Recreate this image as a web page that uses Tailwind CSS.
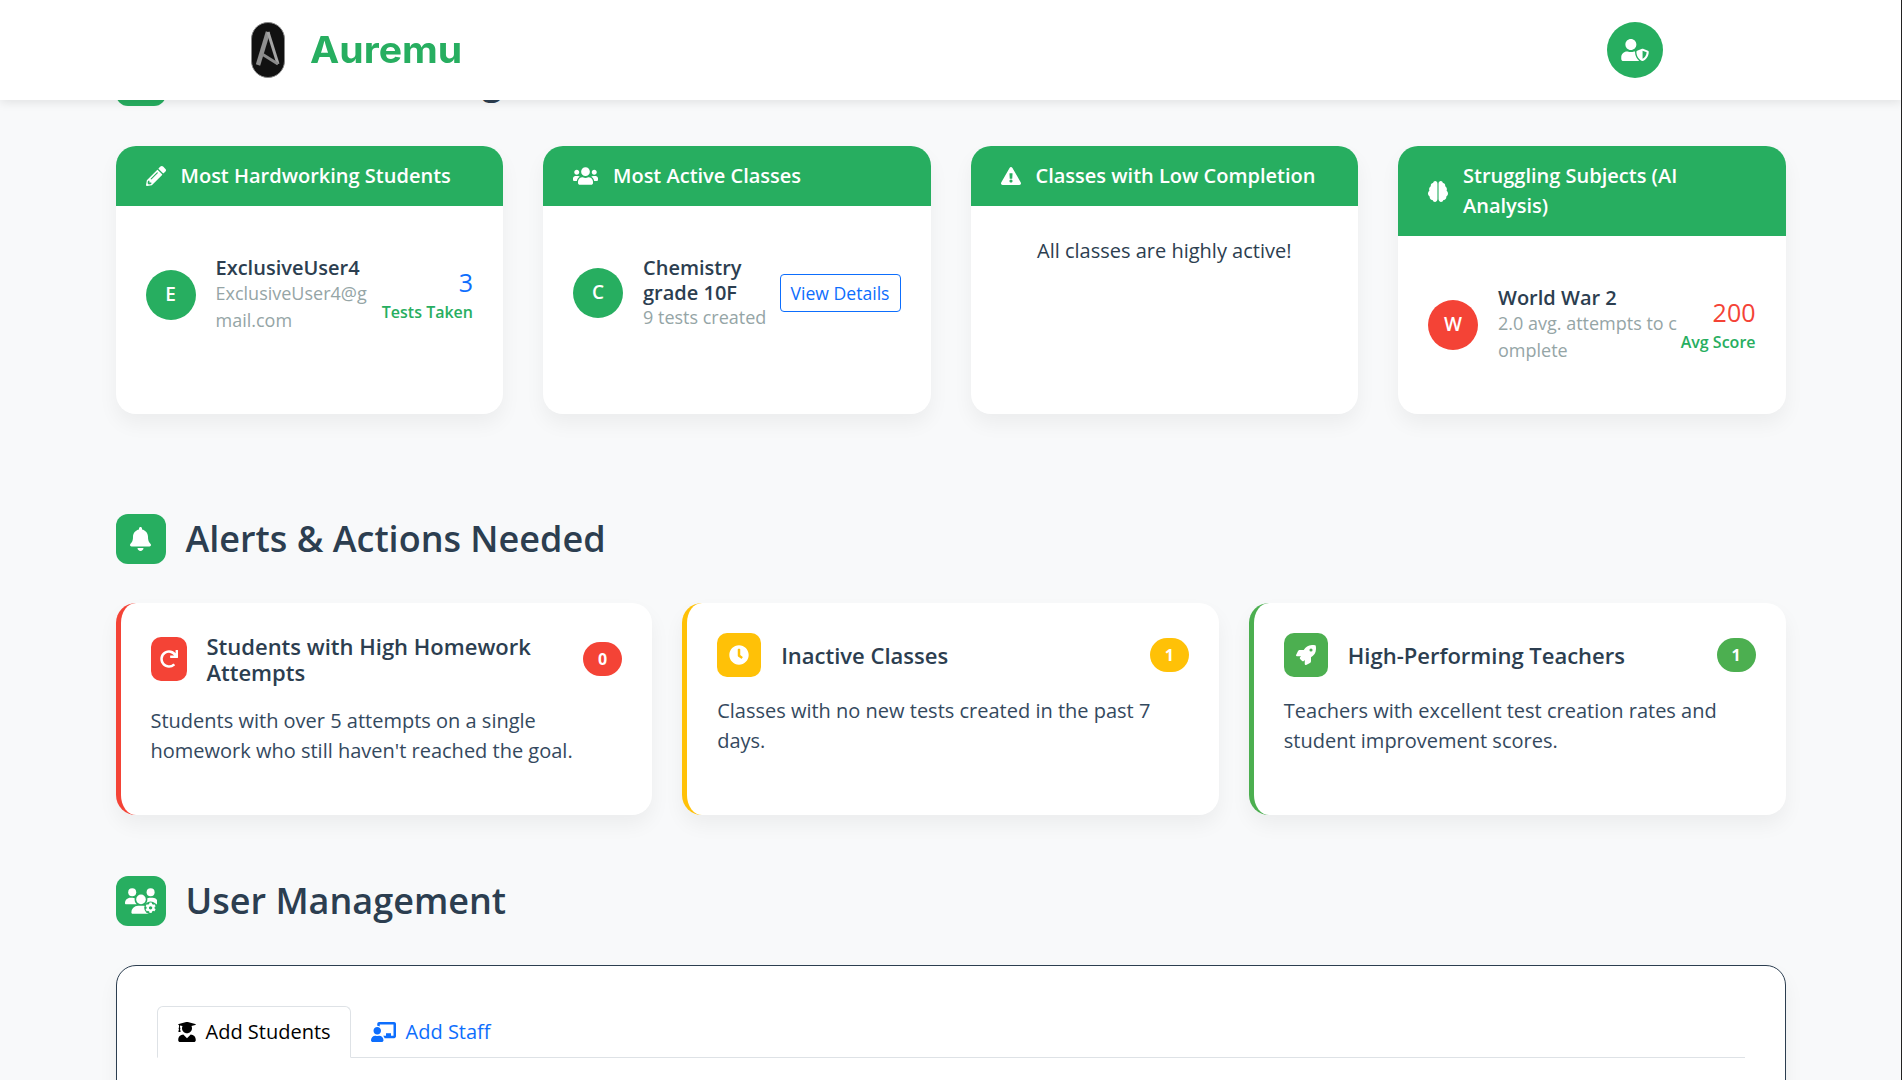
<!doctype html>
<html lang="en">
  <head>
    <meta charset="UTF-8" />
    <title>Auremu</title>
    <script src="https://cdn.jsdelivr.net/npm/@tailwindcss/browser@4"></script>
  </head>

  <body class="bg-[#f8f9fa] h-screen overflow-hidden relative font-['Open_Sans',sans-serif] text-[#2c3e50]">
    <!-- NAV -->
    <nav class="fixed top-0 left-0 right-0 z-10 h-[100px] bg-white shadow-[0_2px_10px_rgba(0,0,0,0.1)] flex items-center justify-between pl-[250px] pr-[239px]">
      <div class="flex items-center gap-[24px]">
        <svg class="w-[36px] h-[56px] blur-[0.4px]" viewBox="0 0 36 56">
          <rect x="1.5" y="0.5" width="33" height="55" rx="16.5" fill="#111" stroke="#888" stroke-width="1" />
          <path d="M8 43 L18 10" fill="none" stroke="#8f8f8f" stroke-width="4.5" />
          <path d="M18 10 L28 42" fill="none" stroke="#a5a5a5" stroke-width="3" />
          <path d="M12 32 L28 42" fill="none" stroke="#8a8a8a" stroke-width="3" />
        </svg>
        <span class="font-['Inter',sans-serif] font-bold text-[37px] origin-left scale-x-[1.06] text-[#27ae60]">Auremu</span>
      </div>
      <div class="w-[56px] h-[56px] rounded-full bg-[#27ae60] flex items-center justify-center">
        <svg class="w-[28px] h-[22px] fill-white" viewBox="0 0 640 512"><path d="M622.3 271.1l-115.2-45c-4.1-1.6-12.6-3.7-22.2 0l-115.2 45c-10.7 4.2-17.7 14-17.7 24.9 0 111.6 68.7 188.8 132.9 213.9 9.6 3.7 18 1.6 22.2 0C558.4 489.9 640 420.5 640 296c0-10.9-7-20.7-17.7-24.9zM496 462.4V273.3l95.5 37.3c-5.6 87.1-60.9 135.4-95.5 151.8zM224 256c70.7 0 128-57.3 128-128S294.7 0 224 0 96 57.3 96 128s57.3 128 128 128zm96 40c0-2.5.8-4.8 1.1-7.2-2.5-.1-4.9-.8-7.5-.8h-16.7c-22.2 10.2-46.9 16-72.9 16s-50.6-5.8-72.9-16h-16.7C60.2 288 0 348.2 0 422.4V464c0 26.5 21.5 48 48 48h352c6.2 0 12.1-1.3 17.5-3.4C369.4 468.7 320 397.5 320 296z" /></svg>
      </div>
    </nav>

    <main class="pl-[115.5px] pr-[116.5px] pt-[56px]">
      <!-- RANKINGS -->
      <div class="flex items-center gap-[20px] mb-[40px]">
        <div class="w-[50px] h-[50px] rounded-[12px] bg-[#27ae60]"></div>
        <h2 class="text-[36px] leading-[50px] font-semibold tracking-[-0.5px]">Teacher &amp; Rankings</h2>
      </div>

      <div class="grid grid-cols-4 gap-[40px] h-[268px] mb-[100px]">
        <div class="bg-white rounded-[20px] shadow-[0_10px_20px_rgba(0,0,0,0.05)] overflow-hidden">
          <div class="bg-[#27ae60] text-white flex items-center gap-[15px] px-[30px] py-[15px] text-[20px] leading-[30px] font-semibold">
            <svg class="w-[20px] h-[20px] fill-white shrink-0" viewBox="0 0 512 512"><path d="M497.9 142.1l-46.1 46.1c-4.7 4.7-12.3 4.7-17 0l-111-111c-4.7-4.7-4.7-12.3 0-17l46.1-46.1c18.7-18.7 49.1-18.7 67.9 0l60.1 60.1c18.8 18.7 18.8 49.1 0 67.9zM284.2 99.8L21.6 362.4.4 483.9c-2.9 16.4 11.4 30.6 27.8 27.8l121.5-21.3 262.6-262.6c4.7-4.7 4.7-12.3 0-17l-111-111c-4.8-4.7-12.4-4.7-17.1 0zM124.1 339.9c-5.5-5.5-5.5-14.3 0-19.8l154-154c5.5-5.5 14.3-5.5 19.8 0s5.5 14.3 0 19.8l-154 154c-5.5 5.5-14.3 5.5-19.8 0zM88 424h48v36.3l-64.5 11.3-31.1-31.1L51.7 376H88v48z" /></svg>
            <span>Most Hardworking Students</span>
          </div>
          <div class="px-[30px] pt-[49px] flex items-center">
            <div class="w-[50px] h-[50px] mr-[20px] rounded-full bg-[#27ae60] text-white font-semibold text-[19px] flex items-center justify-center shrink-0">E</div>
            <div class="flex-1 min-w-0">
              <div class="text-[20px] leading-[25px] font-semibold">ExclusiveUser4</div>
              <div class="text-[18px] leading-[27px] text-[#95a5a6] break-all">ExclusiveUser4@gmail.com</div>
            </div>
            <div class="text-right shrink-0 pb-[2px]">
              <div class="text-[25px] leading-[36px] font-medium text-[#0d6efd]">3</div>
              <div class="text-[16px] leading-[24px] font-semibold text-[#27ae60] whitespace-nowrap">Tests Taken</div>
            </div>
          </div>
        </div>

        <div class="bg-white rounded-[20px] shadow-[0_10px_20px_rgba(0,0,0,0.05)] overflow-hidden">
          <div class="bg-[#27ae60] text-white flex items-center gap-[15px] px-[30px] py-[15px] text-[20px] leading-[30px] font-semibold">
            <svg class="w-[25px] h-[20px] fill-white shrink-0" viewBox="0 0 640 512"><path d="M96 224c35.3 0 64-28.7 64-64s-28.7-64-64-64-64 28.7-64 64 28.7 64 64 64zm448 0c35.3 0 64-28.7 64-64s-28.7-64-64-64-64 28.7-64 64 28.7 64 64 64zm32 32h-64c-17.6 0-33.5 7.1-45.1 18.6 40.3 22.1 68.9 62 75.1 109.4h66c17.7 0 32-14.3 32-32v-32c0-35.3-28.7-64-64-64zm-256 0c61.9 0 112-50.1 112-112S381.9 32 320 32 208 82.1 208 144s50.1 112 112 112zm76.8 32h-8.3c-20.8 10-43.9 16-68.5 16s-47.6-6-68.5-16h-8.3C179.6 288 128 339.6 128 403.2V432c0 26.5 21.5 48 48 48h288c26.5 0 48-21.5 48-48v-28.8c0-63.6-51.6-115.2-115.2-115.2zm-223.7-13.4C161.5 263.1 145.6 256 128 256H64c-35.3 0-64 28.7-64 64v32c0 17.7 14.3 32 32 32h65.9c6.3-47.4 34.9-87.3 75.2-109.4z" /></svg>
            <span>Most Active Classes</span>
          </div>
          <div class="px-[30px] pt-[49px] flex items-center">
            <div class="w-[50px] h-[50px] mr-[20px] rounded-full bg-[#27ae60] text-white font-semibold text-[19px] flex items-center justify-center shrink-0">C</div>
            <div class="flex-1 min-w-0">
              <div class="text-[20px] leading-[25px] font-semibold">Chemistry grade 10F</div>
              <div class="text-[18px] leading-[25px] text-[#95a5a6] whitespace-nowrap">9 tests created</div>
            </div>
            <button class="shrink-0 mt-[1px] border border-[#0d6efd] text-[#0d6efd] rounded-[4px] h-[38px] w-[121px] text-[17.6px] whitespace-nowrap">View Details</button>
          </div>
        </div>

        <div class="bg-white rounded-[20px] shadow-[0_10px_20px_rgba(0,0,0,0.05)] overflow-hidden">
          <div class="bg-[#27ae60] text-white flex items-center gap-[15px] px-[30px] py-[15px] text-[20px] leading-[30px] font-semibold">
            <svg class="w-[20px] h-[20px] fill-white shrink-0" viewBox="0 0 576 512"><path d="M569.517 440.013C587.975 472.007 564.806 512 527.94 512H48.054c-36.937 0-59.999-40.055-41.577-71.987L246.423 23.985c18.467-32.009 64.72-31.951 83.154 0l239.94 416.028zM288 354c-25.405 0-46 20.595-46 46s20.595 46 46 46 46-20.595 46-46-20.595-46-46-46zm-43.673-165.346l7.418 136c.347 6.364 5.609 11.346 11.982 11.346h48.546c6.373 0 11.635-4.982 11.982-11.346l7.418-136c.375-6.874-5.098-12.654-11.982-12.654h-63.383c-6.884 0-12.356 5.78-11.981 12.654z" /></svg>
            <span>Classes with Low Completion</span>
          </div>
          <div class="p-[30px] text-center text-[20px] leading-[30px]">All classes are highly active!</div>
        </div>

        <div class="bg-white rounded-[20px] shadow-[0_10px_20px_rgba(0,0,0,0.05)] overflow-hidden">
          <div class="bg-[#27ae60] text-white flex items-center gap-[15px] px-[30px] py-[15px] text-[20px] leading-[30px] font-semibold">
            <svg class="w-[20px] h-[21px] fill-white shrink-0" viewBox="0 0 576 512" preserveAspectRatio="none"><path d="M208 0c-29.9 0-54.7 20.5-61.8 48.2-.8 0-1.4-.2-2.2-.2-35.3 0-64 28.7-64 64 0 4.8.6 9.5 1.7 14C52.5 138 32 166.6 32 200c0 12.6 3.2 24.3 8.3 34.9C16.3 248.7 0 274.3 0 304c0 33.3 20.4 61.9 49.4 73.9-.9 4.6-1.4 9.3-1.4 14.1 0 39.8 32.2 72 72 72 4.1 0 8.1-.5 12-1.2 9.6 28.5 36.2 49.2 68 49.2 39.8 0 72-32.2 72-72V64c0-35.3-28.7-64-64-64zm368 304c0-29.7-16.3-55.3-40.3-69.1 5.2-10.6 8.3-22.3 8.3-34.9 0-33.4-20.5-62-49.7-74 1-4.5 1.7-9.2 1.7-14 0-35.3-28.7-64-64-64-.8 0-1.5.2-2.2.2C422.7 20.5 397.9 0 368 0c-35.3 0-64 28.6-64 64v376c0 39.8 32.2 72 72 72 31.8 0 58.4-20.7 68-49.2 3.9.7 7.9 1.2 12 1.2 39.8 0 72-32.2 72-72 0-4.8-.5-9.5-1.4-14.1 29-12 49.4-40.6 49.4-73.9z" /></svg>
            <span>Struggling Subjects (AI Analysis)</span>
          </div>
          <div class="px-[30px] pt-[49px] flex items-center">
            <div class="w-[50px] h-[50px] mr-[20px] rounded-full bg-[#f44336] text-white font-semibold text-[19px] flex items-center justify-center shrink-0">W</div>
            <div class="flex-1 min-w-0">
              <div class="text-[20px] leading-[25px] font-semibold">World War 2</div>
              <div class="text-[18px] leading-[27px] text-[#95a5a6] break-all">2.0 avg. attempts to complete</div>
            </div>
            <div class="text-right shrink-0 pb-[2px]">
              <div class="text-[25px] leading-[36px] font-medium text-[#f44336]">200</div>
              <div class="text-[16px] leading-[24px] font-semibold text-[#27ae60] whitespace-nowrap">Avg Score</div>
            </div>
          </div>
        </div>
      </div>

      <!-- ALERTS -->
      <div class="flex items-center gap-[20px] mb-[39px]">
        <div class="w-[50px] h-[50px] rounded-[12px] bg-[#27ae60] flex items-center justify-center">
          <svg class="w-[21px] h-[24px] fill-white" viewBox="0 0 448 512"><path d="M224 512c35.32 0 63.97-28.65 63.97-64H160.03c0 35.35 28.65 64 63.97 64zm215.39-149.71c-19.32-20.76-55.47-51.99-55.47-154.29 0-77.7-54.48-139.9-127.94-155.16V32c0-17.67-14.32-32-31.98-32s-31.98 14.33-31.98 32v20.84C118.56 68.1 64.08 130.3 64.08 208c0 102.3-36.15 133.53-55.47 154.29-6 6.45-8.66 14.16-8.61 21.71.11 16.4 12.98 32 32.1 32h383.8c19.12 0 32-15.6 32.1-32 .05-7.55-2.61-15.27-8.61-21.71z" /></svg>
        </div>
        <h2 class="text-[36px] leading-[50px] font-semibold">Alerts &amp; Actions Needed</h2>
      </div>

      <div class="grid grid-cols-3 gap-[30px] h-[212px] mb-[61px]">
        <div class="bg-white rounded-[20px] border-l-[5px] border-[#f44336] p-[30px] shadow-[0_10px_20px_rgba(0,0,0,0.05)]">
          <div class="flex items-center gap-[20px] mb-[20px]">
            <div class="w-[36px] h-[44px] rounded-[10px] bg-[#f44336] flex items-center justify-center shrink-0">
              <svg class="w-[18px] h-[18px] fill-white" viewBox="0 0 512 512"><path d="M500.33 0h-47.41a12 12 0 0 0-12 12.57l4 82.76A247.42 247.42 0 0 0 256 8C119.34 8 7.9 119.53 8 256.19 8.1 393.07 119.1 504 256 504a247.1 247.1 0 0 0 166.18-63.91 12 12 0 0 0 .48-17.43l-34-34a12 12 0 0 0-16.38-.55A176 176 0 1 1 402.1 157.8l-101.53-4.87a12 12 0 0 0-12.57 12v47.41a12 12 0 0 0 12 12h200.33a12 12 0 0 0 12-12V12a12 12 0 0 0-12-12z" /></svg>
            </div>
            <h3 class="flex-1 min-w-0 text-[22px] leading-[26.4px] font-semibold">Students with High Homework Attempts</h3>
            <span class="w-[39px] h-[34px] rounded-full bg-[#f44336] text-white text-[16px] font-bold flex items-center justify-center shrink-0">0</span>
          </div>
          <p class="text-[20px] leading-[30px] text-[#34495e]">Students with over 5 attempts on a single homework who still haven't reached the goal.</p>
        </div>

        <div class="bg-white rounded-[20px] border-l-[5px] border-[#ffc107] p-[30px] shadow-[0_10px_20px_rgba(0,0,0,0.05)]">
          <div class="flex items-center gap-[20px] mb-[19px]">
            <div class="w-[44px] h-[44px] rounded-[10px] bg-[#ffc107] flex items-center justify-center shrink-0">
              <svg class="w-[20px] h-[20px] fill-white" viewBox="0 0 512 512"><path d="M256,8C119,8,8,119,8,256S119,504,256,504,504,393,504,256,393,8,256,8Zm92.49,313h0l-20,25a16,16,0,0,1-22.49,2.5h0l-67-49.72a40,40,0,0,1-15-31.23V112a16,16,0,0,1,16-16h32a16,16,0,0,1,16,16V256l58,42.5A16,16,0,0,1,348.49,321Z" /></svg>
            </div>
            <h3 class="flex-1 min-w-0 text-[22px] leading-[26.4px] font-semibold">Inactive Classes</h3>
            <span class="w-[39px] h-[34px] rounded-full bg-[#ffc107] text-white text-[16px] font-bold flex items-center justify-center shrink-0">1</span>
          </div>
          <p class="text-[20px] leading-[30px] text-[#34495e]">Classes with no new tests created in the past 7 days.</p>
        </div>

        <div class="bg-white rounded-[20px] border-l-[5px] border-[#4caf50] p-[30px] shadow-[0_10px_20px_rgba(0,0,0,0.05)]">
          <div class="flex items-center gap-[20px] mb-[19px]">
            <div class="w-[44px] h-[44px] rounded-[10px] bg-[#4caf50] flex items-center justify-center shrink-0">
              <svg class="w-[20px] h-[20px] fill-white" viewBox="0 0 512 512"><path d="M505.12019,19.09375c-1.18812-5.53125-6.6644-11-12.20507-12.1875C460.716,0,435.507,0,410.40747,0,307.17523,0,245.26909,55.20312,199.05238,128H94.83772c-16.34763.01562-35.55658,11.875-42.88664,26.48438L2.51562,253.29688A28.4,28.4,0,0,0,0,264a24.00867,24.00867,0,0,0,24.00582,24H127.81618l-22.47457,22.46875c-11.36521,11.36133-12.99607,32.25781,0,45.25L156.24582,406.625c11.15623,11.1875,32.15619,13.15625,45.27726,0l22.47457-22.46875V488a24.00867,24.00867,0,0,0,24.00581,24,28.55934,28.55934,0,0,0,10.707-2.51562l98.72834-49.39063c14.62888-7.29687,26.50776-26.5,26.50776-42.85937V312.79688c72.59753-46.3125,128.03493-108.40626,128.03493-211.09376C512.07526,76.5,512.07526,51.29688,505.12019,19.09375ZM384.04033,168A40,40,0,1,1,424.05,128,40.02322,40.02322,0,0,1,384.04033,168Z" /></svg>
            </div>
            <h3 class="flex-1 min-w-0 text-[22px] leading-[26.4px] font-semibold">High-Performing Teachers</h3>
            <span class="w-[39px] h-[34px] rounded-full bg-[#4caf50] text-white text-[16px] font-bold flex items-center justify-center shrink-0">1</span>
          </div>
          <p class="text-[20px] leading-[30px] text-[#34495e]">Teachers with excellent test creation rates and student improvement scores.</p>
        </div>
      </div>

      <!-- USER MANAGEMENT -->
      <div class="flex items-center gap-[20px] mb-[39px]">
        <div class="w-[50px] h-[50px] rounded-[12px] bg-[#27ae60] flex items-center justify-center">
          <svg class="w-[32px] h-[26px] fill-white" viewBox="0 0 640 512">
            <circle cx="144" cy="80" r="80" />
            <circle cx="512" cy="80" r="80" />
            <circle cx="320" cy="224" r="96" />
            <path d="M0 299C0 240 48 192 107 192h43c16 0 31 3.5 44.6 9.7C193 209 192 216.5 192 224c0 38 17 72.7 43 96H21C9.6 320 0 310 0 299z" />
            <path d="M533 192h-43c-16 0-31 3.5-44.6 9.7 1.3 7.2 1.9 14.7 1.9 22.3 0 38-17 72.7-43 96h235c11.4 0 21-10 21-21 0-59-48-107-107-107z" />
            <path d="M261 352h118c74 0 133 60 133 133 0 15-12 27-27 27H155c-15 0-27-12-27-27 0-73 59-133 133-133z" />
            <circle class="fill-[#27ae60]" cx="512" cy="392" r="128" />
            <g transform="translate(405 285) scale(0.418)">
              <path d="M487.4 315.7l-42.6-24.6c4.3-23.2 4.3-47 0-70.2l42.6-24.6c4.9-2.8 7.1-8.6 5.5-14-11.1-35.6-30-67.8-54.7-94.6-3.8-4.1-10-5.1-14.8-2.3L380.8 110c-17.9-15.4-38.5-27.3-60.8-35.1V25.8c0-5.6-3.9-10.5-9.4-11.7-36.7-8.2-74.3-7.8-109.2 0-5.5 1.2-9.4 6.1-9.4 11.7V75c-22.2 7.9-42.8 19.8-60.8 35.1L88.7 85.5c-4.9-2.8-11-1.9-14.8 2.3-24.7 26.7-43.6 58.9-54.7 94.6-1.7 5.4.6 11.2 5.5 14L67.3 221c-4.3 23.2-4.3 47 0 70.2l-42.6 24.6c-4.9 2.8-7.1 8.6-5.5 14 11.1 35.6 30 67.8 54.7 94.6 3.8 4.1 10 5.1 14.8 2.3l42.6-24.6c17.9 15.4 38.5 27.3 60.8 35.1v49.2c0 5.6 3.9 10.5 9.4 11.7 36.7 8.2 74.3 7.8 109.2 0 5.5-1.2 9.4-6.1 9.4-11.7v-49.2c22.2-7.9 42.8-19.8 60.8-35.1l42.6 24.6c4.9 2.8 11 1.9 14.8-2.3 24.7-26.7 43.6-58.9 54.7-94.6 1.5-5.5-.7-11.3-5.6-14.1zM256 336c-44.1 0-80-35.9-80-80s35.9-80 80-80 80 35.9 80 80-35.9 80-80 80z" />
            </g>
          </svg>
        </div>
        <h2 class="text-[36px] leading-[50px] font-semibold">User Management</h2>
      </div>

      <div class="bg-white rounded-[20px] border border-[#2c3e50] px-[40px] pt-[40px] h-[300px] shadow-[0_10px_20px_rgba(0,0,0,0.05)]">
        <div class="flex border-b border-[#dee2e6] h-[52px] text-[20px]">
          <div class="flex items-center gap-[10px] pl-[20px] pr-[19px] h-[52px] bg-white border border-[#dee2e6] border-b-white rounded-t-[6px] text-black">
            <svg class="w-[18px] h-[20px] fill-black" viewBox="0 0 448 512"><path d="M319.4 320.6L224 416l-95.4-95.4C57.1 323.7 0 382.2 0 454.4v9.6c0 26.5 21.5 48 48 48h352c26.5 0 48-21.5 48-48v-9.6c0-72.2-57.1-130.7-128.6-133.8zM13.6 79.8l6.4 1.5v58.4c-7 4.2-12 11.5-12 20.3 0 8.4 4.6 15.4 11.1 19.7L3.5 242c-1.7 6.9 2.1 14 7.6 14h41.8c5.5 0 9.3-7.1 7.6-14l-15.6-62.3C51.4 175.4 56 168.4 56 160c0-8.8-5-16.1-12-20.3V87.1l66 15.9c-8.6 17.2-14 36.4-14 57 0 70.7 57.3 128 128 128s128-57.3 128-128c0-20.6-5.3-39.8-14-57l96.3-23.2c18.2-4.4 18.2-27.1 0-31.5l-190.4-46c-13-3.1-26.7-3.1-39.7 0L13.6 48.2c-18.1 4.4-18.1 27.2 0 31.6z" /></svg>
            <span>Add Students</span>
          </div>
          <div class="flex items-center gap-[10px] px-[20px] h-[52px] text-[#0d6efd]">
            <svg class="w-[25px] h-[20px] fill-[#0d6efd]" viewBox="0 0 640 512"><path d="M208 352c-2.39 0-4.78.35-7.06 1.09C187.98 357.3 174.35 360 160 360c-14.35 0-27.98-2.7-40.95-6.91-2.28-.74-4.66-1.09-7.05-1.09C49.94 352-.33 402.48 0 464.62.14 490.88 21.73 512 48 512h224c26.27 0 47.86-21.12 48-47.38.33-62.14-49.94-112.62-112-112.62zm-48-32c53.02 0 96-42.98 96-96s-42.98-96-96-96-96 42.98-96 96 42.98 96 96 96zM592 0H208c-26.47 0-48 22.25-48 49.59V96c23.42 0 45.1 6.78 64 17.8V64h352v288h-64v-64H384v64h-76.24c19.1 16.69 33.12 38.73 39.69 64H592c26.47 0 48-22.25 48-49.59V49.59C640 22.25 618.47 0 592 0z" /></svg>
            <span>Add Staff</span>
          </div>
        </div>
      </div>
    </main>

    <!-- thin dark strip down the right edge -->
    <div class="fixed top-0 right-0 bottom-0 w-[1px] z-20 bg-[#222]"></div>
  </body>
</html>
